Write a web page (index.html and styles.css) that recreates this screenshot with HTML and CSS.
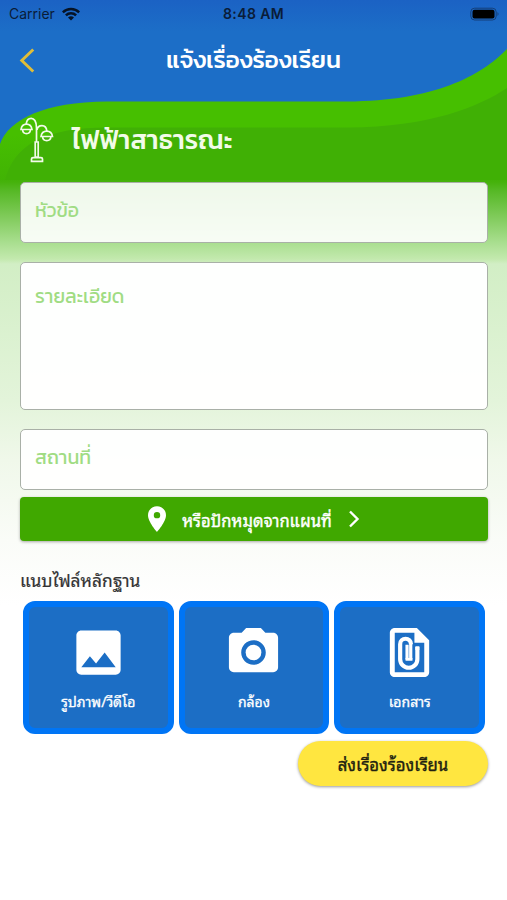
FILE: index.html
```html
<!DOCTYPE html>
<html lang="th">
<head>
<meta charset="utf-8">
<title>แจ้งเรื่องร้องเรียน</title>
<link rel="stylesheet" href="styles.css">
</head>
<body>
<main class="screen">
  <svg class="backdrop" viewBox="0 0 507 180" aria-hidden="true">
    <defs>
      <linearGradient id="sky" x1="0" y1="0" x2="0" y2="1">
        <stop offset="0" stop-color="#1b62c4"/>
        <stop offset=".22" stop-color="#1c6ec7"/>
        <stop offset="1" stop-color="#1c6ec7"/>
      </linearGradient>
      <linearGradient id="rim" x1="0" y1="0" x2="0" y2="1">
        <stop offset=".75" stop-color="#46bf00"/>
        <stop offset="1" stop-color="#41b304"/>
      </linearGradient>
    </defs>
    <rect width="507" height="180" fill="#40b005"/>
    <path fill="url(#rim)" d="M0 0H507V88C478 107 430 127 347 127.500H107C45 127.500 14 145 5 180H0Z"/>
    <path fill="url(#sky)" d="M0 0H507V49C481 76 434 101 347 101.500H107C45 102 9 119 0 144Z"/>
  </svg>
  <div class="status">
    <span class="carrier">Carrier</span>
    <svg class="wifi" viewBox="0 0 18 14"><path d="M0 4.400A13 13 0 0 1 18 4.400L16.300 6.200A10.300 10.300 0 0 0 1.700 6.200ZM3 7.500A8.500 8.500 0 0 1 15 7.500L13.200 9.300A6 6 0 0 0 4.800 9.300ZM6 10.600A4.300 4.300 0 0 1 12 10.600L9 13.600Z"/></svg>
    <span class="clock">8:48 AM</span>
    <svg class="battery" viewBox="0 0 31 14"><rect x="1.800" y="1.200" width="25.400" height="11.800" rx="3.800" fill="none" stroke="#153f78" stroke-width="1"/><rect x="3.500" y="2.800" width="22" height="8.600" rx="2" fill="#000"/><path d="M28.500 5Q30.500 7 28.500 9Z" fill="#153f78"/></svg>
  </div>
  <header class="bar">
    <svg class="back" viewBox="0 0 16 24"><path d="M14 1.500L3 12L14 22.500" fill="none" stroke="#dfbd39" stroke-width="2.800"/></svg>
    <h1 class="title">แจ้งเรื่องร้องเรียน</h1>
  </header>
  <div class="topic">
    <svg class="lamp" viewBox="0 0 34 46" fill="none" stroke="#f2fbe9" stroke-width="1.700">
      <path d="M16.500 25V11C16.500 4 14 1.300 11.200 1.300C8 1.300 6.500 4 6.200 7M17 13C17.500 9.500 19.500 8.700 22 8.700C25 8.700 26.500 10.500 26.800 14"/>
      <path d="M1 12.500C1.500 9 3.500 7.200 6.500 7.200S11.500 9 12 12.500ZM2.500 12.500C3 18 10 18 10.500 12.500M21 19.500C21.500 16 23.500 14.200 26.700 14.200S32 16 32.500 19.500ZM22.500 19.500C23 25 30.500 25 31 19.500"/>
      <path d="M15.200 25H18.200V40H15.200ZM11.500 44.300V42Q11.500 40.700 13 40.700H21Q22.500 40.700 22.500 42V44.300Z"/>
    </svg>
    <h2 class="name">ไฟฟ้าสาธารณะ</h2>
  </div>
  <form class="form">
    <div class="field"><span class="hint subject">หัวข้อ</span></div>
    <div class="field details"><span class="hint detail">รายละเอียด</span></div>
    <div class="field place"><span class="hint location">สถานที่</span></div>
    <div class="map">
      <svg class="pin" viewBox="5 2 14 20"><path fill="#fff" d="M12 2C8.130 2 5 5.130 5 9c0 5.250 7 13 7 13s7-7.750 7-13c0-3.870-3.130-7-7-7zm0 9.500a2.500 2.500 0 0 1 0-5 2.500 2.500 0 0 1 0 5z"/></svg>
      <span class="maptext">หรือปักหมุดจากแผนที่</span>
      <svg class="next" viewBox="0 0 12 18"><path d="M2 1.500L9.500 9L2 16.500" fill="none" stroke="#fff" stroke-width="2.400"/></svg>
    </div>
    <h3 class="label">แนบไฟล์หลักฐาน</h3>
    <div class="cards">
      <div class="card">
        <svg class="icon" viewBox="0 0 24 24"><path d="M21 19V5c0-1.100-.9-2-2-2H5c-1.100 0-2 .9-2 2v14c0 1.100.9 2 2 2h14c1.100 0 2-.9 2-2zM8.500 13.500l2.500 3.010L14.500 12l4.500 6H5l3.500-4.500z"/></svg>
        <span class="caption photo">รูปภาพ/วีดีโอ</span>
      </div>
      <div class="card">
        <svg class="icon" viewBox="0 0 24 24"><circle cx="12" cy="12" r="3.200"/><path d="M9 2L7.170 4H4c-1.100 0-2 .9-2 2v12c0 1.100.9 2 2 2h16c1.100 0 2-.9 2-2V6c0-1.100-.9-2-2-2h-3.170L15 2H9zm3 15c-2.760 0-5-2.240-5-5s2.240-5 5-5 5 2.240 5 5-2.240 5-5 5z"/></svg>
        <span class="caption camera">กล้อง</span>
      </div>
      <div class="card">
        <svg class="icon" viewBox="0 0 24 24"><path fill-rule="evenodd" d="M6 2h9l5 5v13c0 1.100-.9 2-2 2H6c-1.100 0-2-.9-2-2V4c0-1.100.9-2 2-2zM6 4v16h12V8h-4V4z"/><path fill="none" stroke="#fff" stroke-width="1.700" d="M15.200 9.800v4.900a3.500 3.500 0 0 1-7 0V8.600a2.200 2.200 0 0 1 4.400 0"/><path fill="none" stroke="#fff" stroke-width="1.300" d="M12.500 8.400V14.800M11 8.800V14.800"/><path d="M10.400 14.200H13.200V15.400H10.400ZM14.400 9.500H16V11H14.400Z"/></svg>
        <span class="caption document">เอกสาร</span>
      </div>
    </div>
    <div class="submit"><span class="submittext">ส่งเรื่องร้องเรียน</span></div>
  </form>
</main>
</body>
</html>
```

FILE: styles.css
```css
* { box-sizing: border-box; }
body { margin: 0; font-family: Kanit, Prompt, "Noto Sans Thai", "Noto Sans", sans-serif; }
h1, h2, h3 { margin: 0; }
span, h1, h2, h3 { white-space: nowrap; }
svg { display: block; flex: none; }
.screen {
  position: relative; width: 507px; height: 900px; overflow: hidden;
  background: linear-gradient(#40b005 176px, #45b20b 182px, #55b824 190px, #85cd61 220px, #a8de8e 242px, #c3e9ae 259px, #d2eec5 264px, #e3f4da 400px, #f0f8ea 460px, #fafcf8 540px, #fff 605px);
}
.backdrop { position: absolute; inset: 0 0 auto; width: 507px; height: 180px; }
.status, .bar, .topic, .form { position: relative; }
.status { display: grid; grid-template-columns: 53px 161px 1fr 31px; height: 28px; padding: 0 7px 0 9px; align-items: center; font: 14px/28px Inter, sans-serif; color: #0a1c38; }
.wifi { width: 18px; height: 14px; fill: #061326; }
.clock { font-weight: 600; font-size: 14px; letter-spacing: .4px; }
.battery { width: 31px; height: 14px; }
.bar { display: grid; grid-template-columns: 26px 1fr 26px; height: 64px; padding: 0 18px; align-items: center; }
.back { width: 18px; height: 25px; }
.title { justify-self: center; font-size: 24.300px; font-weight: 500; line-height: 36px; color: #fff; }
.topic { display: flex; height: 90px; padding: 25px 0 0 20px; gap: 18px; }
.lamp { width: 34px; height: 46px; }
.name { font-size: 26.500px; line-height: 46px; font-weight: 500; color: #f2fbe9; }
.form { display: flex; flex-direction: column; margin: 0 19px 0 20px; }
.field { height: 61px; padding: 0 14px; border: 1.500px solid #a9b0a7; border-radius: 5px; background: #fffffff0; font-size: 19.500px; line-height: 55px; color: #a0dc83; }
.form > .field:first-child { background: #ffffffe8; }
.details { height: 148px; margin: 19px 0; line-height: 68px; background: #fffffff8; }
.map, .label, .caption, .submit { font-family: "Noto Sans Thai Looped", "Noto Looped Thai", Sarabun, Loma, Garuda, Waree, Umpush, "Noto Serif Thai", "Noto Sans Thai", sans-serif; }
.map { display: flex; align-items: center; justify-content: center; gap: 16px; height: 44px; margin-top: 7px; border-radius: 4px; background: #40a800; box-shadow: 0 1px 3px #0005; color: #fff; }
.maptext { font-size: 16.600px; -webkit-text-stroke: .4px; }
.pin { width: 18px; height: 26px; }
.next { width: 12px; height: 18px; }
.label { margin-top: 24px; height: 36px; font-size: 17.400px; line-height: 28px; font-weight: 400; color: #333; -webkit-text-stroke: .2px; }
.cards { display: grid; grid-template-columns: repeat(3, 1fr); gap: 5px; padding: 0 3px; }
.card { display: flex; flex-direction: column; align-items: center; height: 133px; padding: 16px 0 0; border: 6px solid #0075f5; border-radius: 12px; background: #1c6ec5; color: #fff; }
.icon { width: 59px; height: 59px; fill: #fff; }
.caption { margin-top: 7px; font-size: 14px; line-height: 24px; -webkit-text-stroke: .3px; }
.submit { align-self: flex-end; display: grid; place-items: center; width: 190px; height: 45px; margin-top: 7px; border-radius: 23px; background: #ffe640; box-shadow: 0 1px 3px #0006; font-size: 16.800px; color: #221f10; -webkit-text-stroke: .4px; }
```
